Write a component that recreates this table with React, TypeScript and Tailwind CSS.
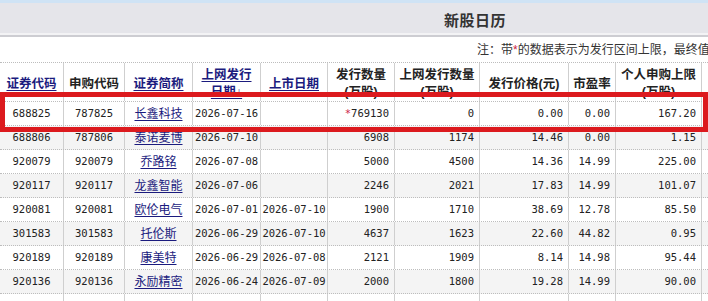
import React from 'react';

type Row = {
    code: string;
    subCode: string;
    name: string;
    issueDate: string;
    listDate: string;
    issueQty: string;
    starred?: boolean;
    onlineQty: string;
    price: string;
    pe: string;
    limit: string;
};

const rows: Row[] = [
    { code: '688825', subCode: '787825', name: '长鑫科技', issueDate: '2026-07-16', listDate: '', issueQty: '769130', starred: true, onlineQty: '0', price: '0.00', pe: '0.00', limit: '167.20' },
    { code: '688806', subCode: '787806', name: '泰诺麦博', issueDate: '2026-07-10', listDate: '', issueQty: '6908', onlineQty: '1174', price: '14.46', pe: '0.00', limit: '1.15' },
    { code: '920079', subCode: '920079', name: '乔路铭', issueDate: '2026-07-08', listDate: '', issueQty: '5000', onlineQty: '4500', price: '14.36', pe: '14.99', limit: '225.00' },
    { code: '920117', subCode: '920117', name: '龙鑫智能', issueDate: '2026-07-06', listDate: '', issueQty: '2246', onlineQty: '2021', price: '17.83', pe: '14.99', limit: '101.07' },
    { code: '920081', subCode: '920081', name: '欧伦电气', issueDate: '2026-07-01', listDate: '2026-07-10', issueQty: '1900', onlineQty: '1710', price: '38.69', pe: '12.78', limit: '85.50' },
    { code: '301583', subCode: '301583', name: '托伦斯', issueDate: '2026-06-29', listDate: '2026-07-10', issueQty: '4637', onlineQty: '1623', price: '22.60', pe: '44.82', limit: '0.95' },
    { code: '920189', subCode: '920189', name: '康美特', issueDate: '2026-06-29', listDate: '2026-07-08', issueQty: '2121', onlineQty: '1909', price: '8.14', pe: '14.98', limit: '95.44' },
    { code: '920136', subCode: '920136', name: '永励精密', issueDate: '2026-06-24', listDate: '2026-07-09', issueQty: '2000', onlineQty: '1800', price: '19.28', pe: '14.99', limit: '90.00' },
];

const cols = 'grid grid-cols-[64px_61px_68px_68px_67px_67px_85px_89px_47px_86px_80px]';
const cell = 'border-r border-[#cfcfcf] flex items-center h-full';
const num = "font-['DejaVu_Sans_Mono',monospace] text-[10.5px] text-[#222]";
const link = 'text-[#1b1b7e] underline underline-offset-2';

const Head: React.FC<{ lines: string[]; isLink?: boolean }> = ({ lines, isLink }) => (
    <div className={`${cell} justify-center pt-[4px]`}>
        <div className={`text-center font-bold text-[12.5px] leading-[17px] ${isLink ? link : 'text-[#222]'}`}>
            {lines.map(l => (
                <div key={l}>{l}</div>
            ))}
        </div>
    </div>
);

export default function App() {
    return (
        <div className="w-[708px] h-[301px] overflow-hidden bg-white relative font-['Liberation_Sans','Noto_Sans_CJK_SC',sans-serif]">
            <div className="w-[948px]">
                <div className="h-[3px] bg-[#cfe3f5]" />
                <div className="h-[30px] bg-[#e5e5ea] flex items-center pl-[444px] pt-[7px]">
                    <span className="text-[15px] font-bold text-[#333] tracking-[0.5px]">新股日历</span>
                </div>
                <div className="h-[2px] bg-[#f3f3f5]" />
                <div className="h-[2px] bg-[#cdcdd2]" />
                <div className="h-[25px] flex items-center pl-[477px] pt-[1px] text-[12px] text-[#333] whitespace-nowrap">
                    注：带<span className="text-[#cc2244]">*</span>的数据表示为发行区间上限，最终值以发行公告为准
                </div>

                <div className={`${cols} h-[40px] border-t border-dotted border-[#bdbdbd] border-b`}>
                    <Head lines={['证券代码']} isLink />
                    <Head lines={['申购代码']} />
                    <Head lines={['证券简称']} isLink />
                    <Head lines={['上网发行', '日期↓']} isLink />
                    <Head lines={['上市日期']} isLink />
                    <Head lines={['发行数量', '(万股)']} />
                    <Head lines={['上网发行数量', '(万股)']} />
                    <Head lines={['发行价格(元)']} />
                    <Head lines={['市盈率']} />
                    <Head lines={['个人申购上限', '(万股)']} />
                    <div className={cell} />
                </div>

                {rows.map((r, i) => (
                    <div key={r.code} className={`${cols} h-[24px] border-b border-dotted border-[#bdbdbd] ${i % 2 === 1 ? 'bg-[#f4f4f4]' : 'bg-white'}`}>
                        <div className={`${cell} justify-center ${num}`}>{r.code}</div>
                        <div className={`${cell} justify-center ${num}`}>{r.subCode}</div>
                        <div className={`${cell} justify-center text-[12px]`}>
                            <span className={link}>{r.name}</span>
                        </div>
                        <div className={`${cell} justify-center ${num}`}>{r.issueDate}</div>
                        <div className={`${cell} justify-center ${num}`}>{r.listDate}</div>
                        <div className={`${cell} justify-end pr-[5px] ${num}`}>
                            {r.starred && <span className="text-[#cc2244]">*</span>}
                            {r.issueQty}
                        </div>
                        <div className={`${cell} justify-end pr-[5px] ${num}`}>{r.onlineQty}</div>
                        <div className={`${cell} justify-end pr-[5px] ${num}`}>{r.price}</div>
                        <div className={`${cell} justify-end pr-[5px] ${num}`}>{r.pe}</div>
                        <div className={`${cell} justify-end pr-[5px] ${num}`}>{r.limit}</div>
                        <div className={cell} />
                    </div>
                ))}
                {/* next row, only its top shows at the bottom edge */}
                <div className={`${cols} h-[24px]`}>
                    <div className={cell} />
                    <div className={cell} />
                    <div className={`${cell} justify-center items-start pt-[5px] text-[12px]`}>
                        <span className={link}>科创新材</span>
                    </div>
                    <div className={cell} />
                    <div className={cell} />
                    <div className={cell} />
                    <div className={cell} />
                    <div className={cell} />
                    <div className={cell} />
                    <div className={cell} />
                    <div className={cell} />
                </div>
            </div>

            {/* highlight box drawn over the first row */}
            <div className="absolute left-0 top-[92px] w-[708px] h-[40px] border-[5px] border-[#dc1a1e]" />
        </div>
    );
}
